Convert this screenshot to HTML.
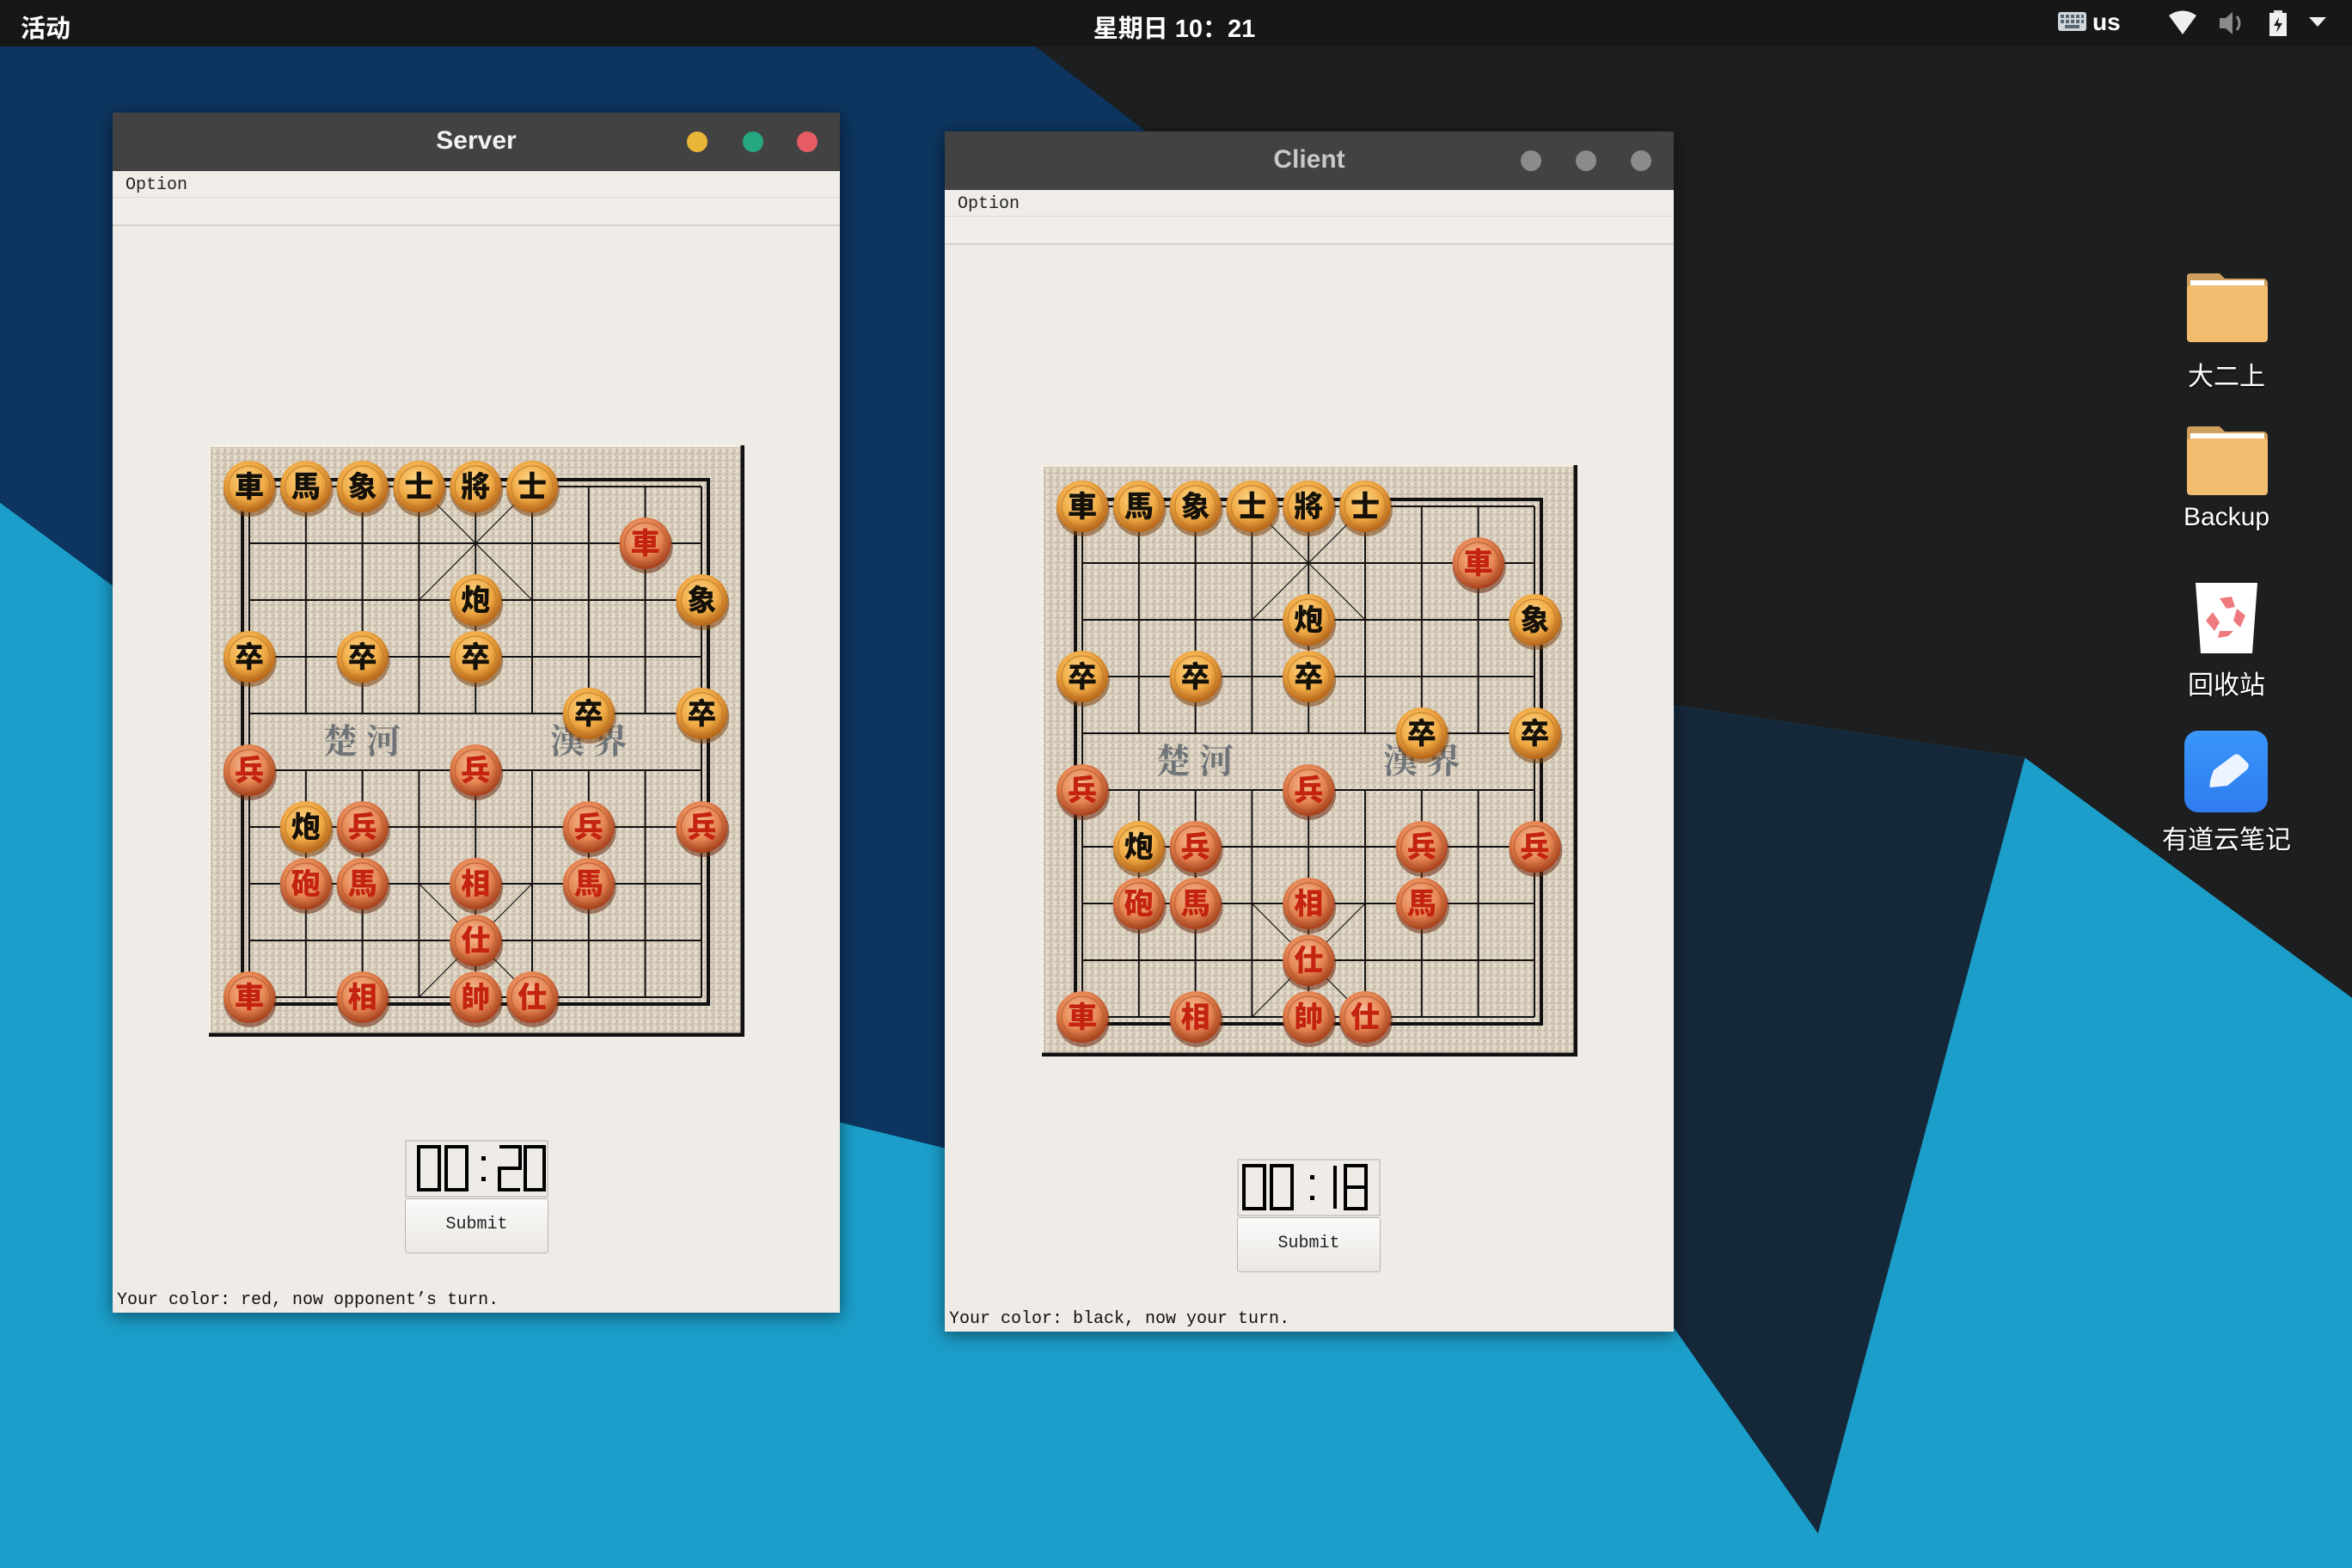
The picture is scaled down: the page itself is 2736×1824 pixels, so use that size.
<!DOCTYPE html>
<html><head><meta charset="utf-8">
<style>
*{margin:0;padding:0;box-sizing:border-box}
html,body{width:2736px;height:1824px;overflow:hidden;background:#1b9ec9;font-family:"Liberation Sans","Noto Sans CJK SC",sans-serif}
#bg{position:absolute;left:0;top:0;width:2736px;height:1824px}
#topbar{position:absolute;left:0;top:0;width:2736px;height:54px;background:#171717;color:#fff}
.win{position:absolute;background:#efebe7;box-shadow:0 4px 18px rgba(0,0,0,.5)}
.tb{position:absolute;left:0;top:0;width:100%;height:68px;background:#424242;}
.tb .t{position:absolute;left:0;width:100%;top:16px;text-align:center;font-weight:bold;font-size:30px;color:#f2f2f2}
.dot{position:absolute;top:22px;width:24px;height:24px;border-radius:50%}
.menu{position:absolute;left:0;top:68px;width:100%;height:31px;border-bottom:1px solid #dcd8d3;font-family:"Liberation Mono",monospace;font-size:20px;color:#222;padding:5px 0 0 15px;background:#f0ede9}
.tool{position:absolute;left:0;top:99px;width:100%;height:33px;border-bottom:2px solid #d6d2cc;background:#f1eeea}
.board{position:absolute;width:623px;height:688px}
.clock{position:absolute;width:167px;height:67px;background:#efebe7;border:2px solid #cfcbc6}
.btn{position:absolute;width:167px;height:64px;border:1px solid #b9b5b0;border-radius:3px;background:linear-gradient(#fbfaf9,#ebe8e4);font-family:"Liberation Mono",monospace;font-size:20px;text-align:center;line-height:60px;color:#222}
.status{position:absolute;left:5px;font-family:"Liberation Mono",monospace;font-size:20px;color:#111;white-space:pre}
.ic{position:absolute;text-align:center;color:#fff;font-size:30px;width:200px;font-family:"Liberation Sans","Noto Sans CJK SC",sans-serif;text-shadow:0 1px 2px #000}
.pc text{font-family:"Noto Sans CJK SC",sans-serif;font-weight:900;font-size:34px;text-anchor:middle}
.bk text{fill:#151008}
.rd text{fill:#c3230f}
</style></head><body>
<svg id="bg" viewBox="0 0 1568 1045" preserveAspectRatio="none">
<rect width="1568" height="1045" fill="#1b9ec9"/>
<polygon points="0,0 720,0 1116,480 1116,885 560,748 0,335" fill="#0d355f"/>
<polygon points="650,0 1568,0 1568,665 1350,505 1116,470 780,100" fill="#1d1e20"/>
<polygon points="1116,470 1350,505 1212,1022 1116,885" fill="#15283a"/>
</svg>

<div id="topbar">
<div style="position:absolute;left:24px;top:10px;font-size:29px;font-weight:bold">活动</div>
<div style="position:absolute;left:1266px;width:200px;top:10px;text-align:center;font-size:29px;font-weight:bold">星期日 10：21</div>
<svg style="position:absolute;left:2394px;top:14px" width="34" height="24"><rect x="0" y="0" width="33" height="22" rx="3" fill="#cfd6dc"/><g fill="#5a6570"><rect x="3" y="3" width="4" height="4"/><rect x="9" y="3" width="4" height="4"/><rect x="15" y="3" width="4" height="4"/><rect x="21" y="3" width="4" height="4"/><rect x="27" y="3" width="3" height="4"/><rect x="3" y="9" width="4" height="4"/><rect x="9" y="9" width="4" height="4"/><rect x="15" y="9" width="4" height="4"/><rect x="21" y="9" width="4" height="4"/><rect x="27" y="9" width="3" height="4"/><rect x="8" y="15" width="17" height="4"/></g></svg>
<div style="position:absolute;left:2434px;top:10px;font-size:28px;font-weight:bold">us</div>
<svg style="position:absolute;left:2522px;top:12px" width="34" height="30"><path d="M1,6 Q17,-5 33,6 L17,28 Z" fill="#efefef"/></svg>
<svg style="position:absolute;left:2580px;top:12px" width="34" height="30"><path d="M2,9 H9 L17,2 V28 L9,21 H2 Z" fill="#8a8a8a"/><path d="M22,7 Q28,15 22,23" stroke="#8a8a8a" stroke-width="3" fill="none"/></svg>
<svg style="position:absolute;left:2638px;top:12px" width="24" height="32"><rect x="7" y="0" width="10" height="4" fill="#ddd"/><rect x="2" y="3" width="20" height="27" fill="#efefef"/><path d="M13,8 L7,18 H12 L10,26 L17,15 H12 Z" fill="#1b1b1b"/></svg>
<svg style="position:absolute;left:2686px;top:20px" width="22" height="14"><path d="M0,0 H20 L10,11 Z" fill="#eee"/></svg>
</div>

<svg style="position:absolute;left:2542px;top:316px" width="98" height="84"><path d="M6,2 H40 L46,8 H90 Q96,8 96,14 V20 H2 V6 Q2,2 6,2Z" fill="#cf9f5d"/><rect x="6" y="10" width="86" height="20" fill="#fff"/><rect x="2" y="16" width="94" height="66" rx="4" fill="#f2bd6f"/></svg>
<div class="ic" style="left:2490px;top:413px">大二上</div>
<svg style="position:absolute;left:2542px;top:494px" width="98" height="84"><path d="M6,2 H40 L46,8 H90 Q96,8 96,14 V20 H2 V6 Q2,2 6,2Z" fill="#cf9f5d"/><rect x="6" y="10" width="86" height="20" fill="#fff"/><rect x="2" y="16" width="94" height="66" rx="4" fill="#f2bd6f"/></svg>
<div class="ic" style="left:2490px;top:585px">Backup</div>
<svg style="position:absolute;left:2552px;top:676px" width="76" height="86"><path d="M2,2 H74 L68,84 H8 Z" fill="#fff"/><g fill="#ee7a7f"><path d="M30,20 L44,18 L48,30 L38,32Z"/><path d="M50,32 L60,40 L54,54 L46,46Z"/><path d="M22,36 L30,48 L24,58 L14,46Z"/><path d="M30,58 L46,58 L40,64 L28,66Z"/></g></svg>
<div class="ic" style="left:2490px;top:772px">回收站</div>
<svg style="position:absolute;left:2541px;top:850px" width="98" height="96"><defs><linearGradient id="yd" x1="0" y1="0" x2="0" y2="1"><stop offset="0" stop-color="#3a96f8"/><stop offset="1" stop-color="#2f7cf0"/></linearGradient></defs><rect width="97" height="95" rx="16" fill="url(#yd)"/><path d="M34,46 L58,28 Q62,26 66,30 L74,38 Q76,42 72,46 L50,64 L30,66 Q28,62 34,46Z" fill="#eef4ff"/></svg>
<div class="ic" style="left:2490px;top:952px">有道云笔记</div>

<svg width="0" height="0" style="position:absolute">
<defs>
<radialGradient id="gb" cx="45%" cy="38%" r="60%"><stop offset="0" stop-color="#ffd98a"/><stop offset=".6" stop-color="#f0aa45"/><stop offset="1" stop-color="#b8681a"/></radialGradient>
<radialGradient id="gr" cx="45%" cy="38%" r="60%"><stop offset="0" stop-color="#f8c09a"/><stop offset=".6" stop-color="#e58552"/><stop offset="1" stop-color="#a9431e"/></radialGradient>
<pattern id="tex" width="8" height="8" patternUnits="userSpaceOnUse"><rect width="8" height="8" fill="#d9cfbf"/><rect x="0" y="0" width="4" height="3" fill="#c9bcaa"/><rect x="5" y="4" width="3" height="4" fill="#e6dece"/><rect x="2" y="5" width="2" height="2" fill="#bfb19f"/></pattern>
<g id="pb"><circle cx="1" cy="4" r="31" fill="#7a4410" opacity=".55"/><circle r="30" fill="url(#gb)"/><circle r="24" fill="none" stroke="#c07a28" stroke-width="1.5" opacity=".7"/></g>
<g id="pr"><circle cx="1" cy="4" r="31" fill="#6a2a10" opacity=".55"/><circle r="30" fill="url(#gr)"/><circle r="24" fill="none" stroke="#b85a30" stroke-width="1.5" opacity=".7"/></g>
</defs></svg>

<!-- SERVER -->
<div class="win" style="left:131px;top:131px;width:846px;height:1396px">
<div class="tb"><div class="t">Server</div>
<div class="dot" style="left:668px;background:#e8b637"></div>
<div class="dot" style="left:733px;background:#27a682"></div>
<div class="dot" style="left:796px;background:#e55c64"></div></div>
<div class="menu">Option</div><div class="tool"></div>
<svg class="board" style="left:112px;top:387px" viewBox="0 0 623 688">
<rect width="623" height="688" fill="url(#tex)"/>
<path d="M0,0 H623 M0,0 V688" stroke="#f6efe2" stroke-width="4"/>
<path d="M621,0 V686 H0" stroke="#111" stroke-width="5" fill="none"/>
<rect x="39" y="40" width="542" height="610" fill="none" stroke="#111" stroke-width="4"/>
<g stroke="#111" stroke-width="2" fill="none">
<path d="M47,48H573M47,114H573M47,180H573M47,246H573M47,312H573M47,378H573M47,444H573M47,510H573M47,576H573M47,642H573"/>
<path d="M47,48V642M573,48V642M112.8,48V312M178.6,48V312M244.4,48V312M310.2,48V312M376,48V312M441.8,48V312M507.6,48V312M112.8,378V642M178.6,378V642M244.4,378V642M310.2,378V642M376,378V642M441.8,378V642M507.6,378V642"/>
<path d="M244.4,48L376,180M376,48L244.4,180M244.4,510L376,642M376,510L244.4,642" stroke-width="1.2"/>
</g>
<text x="178" y="358" font-family="Noto Serif CJK SC,serif" font-size="40" font-weight="bold" fill="#6f7478" text-anchor="middle">楚 河</text>
<text x="442" y="358" font-family="Noto Serif CJK SC,serif" font-size="40" font-weight="bold" fill="#6f7478" text-anchor="middle">漢 界</text>
<g class="pc bk"><use href="#pb" x="47" y="48"/><text x="47" y="60">車</text><use href="#pb" x="112.8" y="48"/><text x="112.8" y="60">馬</text><use href="#pb" x="178.6" y="48"/><text x="178.6" y="60">象</text><use href="#pb" x="244.4" y="48"/><text x="244.4" y="60">士</text><use href="#pb" x="310.2" y="48"/><text x="310.2" y="60">將</text><use href="#pb" x="376" y="48"/><text x="376" y="60">士</text>
<use href="#pb" x="310.2" y="180"/><text x="310.2" y="192">炮</text><use href="#pb" x="573.4" y="180"/><text x="573.4" y="192">象</text>
<use href="#pb" x="47" y="246"/><text x="47" y="258">卒</text><use href="#pb" x="178.6" y="246"/><text x="178.6" y="258">卒</text><use href="#pb" x="310.2" y="246"/><text x="310.2" y="258">卒</text>
<use href="#pb" x="441.8" y="312"/><text x="441.8" y="324">卒</text><use href="#pb" x="573.4" y="312"/><text x="573.4" y="324">卒</text>
<use href="#pb" x="112.8" y="444"/><text x="112.8" y="456">炮</text></g>
<g class="pc rd"><use href="#pr" x="507.6" y="114"/><text x="507.6" y="126">車</text>
<use href="#pr" x="47" y="378"/><text x="47" y="390">兵</text><use href="#pr" x="310.2" y="378"/><text x="310.2" y="390">兵</text>
<use href="#pr" x="178.6" y="444"/><text x="178.6" y="456">兵</text><use href="#pr" x="441.8" y="444"/><text x="441.8" y="456">兵</text><use href="#pr" x="573.4" y="444"/><text x="573.4" y="456">兵</text>
<use href="#pr" x="112.8" y="510"/><text x="112.8" y="522">砲</text><use href="#pr" x="178.6" y="510"/><text x="178.6" y="522">馬</text><use href="#pr" x="310.2" y="510"/><text x="310.2" y="522">相</text><use href="#pr" x="441.8" y="510"/><text x="441.8" y="522">馬</text>
<use href="#pr" x="310.2" y="576"/><text x="310.2" y="588">仕</text>
<use href="#pr" x="47" y="642"/><text x="47" y="654">車</text><use href="#pr" x="178.6" y="642"/><text x="178.6" y="654">相</text><use href="#pr" x="310.2" y="642"/><text x="310.2" y="654">帥</text><use href="#pr" x="376" y="642"/><text x="376" y="654">仕</text></g>
</svg>
<div class="clock" style="left:340px;top:1195px"><svg width="163" height="63" viewBox="0 0 163 63"><g fill="none" stroke="#000" stroke-width="4"><rect x="14" y="6" width="24" height="50"/><rect x="46" y="6" width="24" height="50"/><path d="M108,6H132V31H108V56H132"/><rect x="138" y="6" width="22" height="50"/></g><rect x="87" y="17" width="5" height="5"/><rect x="87" y="41" width="5" height="5"/></svg></div>
<div class="btn" style="left:340px;top:1263px">Submit</div>
<div class="status" style="top:1370px">Your color: red, now opponent’s turn.</div>
</div>

<!-- CLIENT -->
<div class="win" style="left:1099px;top:153px;width:848px;height:1396px">
<div class="tb"><div class="t" style="color:#c9c9c9">Client</div>
<div class="dot" style="left:670px;background:#8b8b8b"></div>
<div class="dot" style="left:734px;background:#8b8b8b"></div>
<div class="dot" style="left:798px;background:#8b8b8b"></div></div>
<div class="menu">Option</div><div class="tool"></div>
<svg class="board" style="left:113px;top:388px" viewBox="0 0 623 688">
<rect width="623" height="688" fill="url(#tex)"/>
<path d="M0,0 H623 M0,0 V688" stroke="#f6efe2" stroke-width="4"/>
<path d="M621,0 V686 H0" stroke="#111" stroke-width="5" fill="none"/>
<rect x="39" y="40" width="542" height="610" fill="none" stroke="#111" stroke-width="4"/>
<g stroke="#111" stroke-width="2" fill="none">
<path d="M47,48H573M47,114H573M47,180H573M47,246H573M47,312H573M47,378H573M47,444H573M47,510H573M47,576H573M47,642H573"/>
<path d="M47,48V642M573,48V642M112.8,48V312M178.6,48V312M244.4,48V312M310.2,48V312M376,48V312M441.8,48V312M507.6,48V312M112.8,378V642M178.6,378V642M244.4,378V642M310.2,378V642M376,378V642M441.8,378V642M507.6,378V642"/>
<path d="M244.4,48L376,180M376,48L244.4,180M244.4,510L376,642M376,510L244.4,642" stroke-width="1.2"/>
</g>
<text x="178" y="358" font-family="Noto Serif CJK SC,serif" font-size="40" font-weight="bold" fill="#6f7478" text-anchor="middle">楚 河</text>
<text x="442" y="358" font-family="Noto Serif CJK SC,serif" font-size="40" font-weight="bold" fill="#6f7478" text-anchor="middle">漢 界</text>
<g class="pc bk"><use href="#pb" x="47" y="48"/><text x="47" y="60">車</text><use href="#pb" x="112.8" y="48"/><text x="112.8" y="60">馬</text><use href="#pb" x="178.6" y="48"/><text x="178.6" y="60">象</text><use href="#pb" x="244.4" y="48"/><text x="244.4" y="60">士</text><use href="#pb" x="310.2" y="48"/><text x="310.2" y="60">將</text><use href="#pb" x="376" y="48"/><text x="376" y="60">士</text>
<use href="#pb" x="310.2" y="180"/><text x="310.2" y="192">炮</text><use href="#pb" x="573.4" y="180"/><text x="573.4" y="192">象</text>
<use href="#pb" x="47" y="246"/><text x="47" y="258">卒</text><use href="#pb" x="178.6" y="246"/><text x="178.6" y="258">卒</text><use href="#pb" x="310.2" y="246"/><text x="310.2" y="258">卒</text>
<use href="#pb" x="441.8" y="312"/><text x="441.8" y="324">卒</text><use href="#pb" x="573.4" y="312"/><text x="573.4" y="324">卒</text>
<use href="#pb" x="112.8" y="444"/><text x="112.8" y="456">炮</text></g>
<g class="pc rd"><use href="#pr" x="507.6" y="114"/><text x="507.6" y="126">車</text>
<use href="#pr" x="47" y="378"/><text x="47" y="390">兵</text><use href="#pr" x="310.2" y="378"/><text x="310.2" y="390">兵</text>
<use href="#pr" x="178.6" y="444"/><text x="178.6" y="456">兵</text><use href="#pr" x="441.8" y="444"/><text x="441.8" y="456">兵</text><use href="#pr" x="573.4" y="444"/><text x="573.4" y="456">兵</text>
<use href="#pr" x="112.8" y="510"/><text x="112.8" y="522">砲</text><use href="#pr" x="178.6" y="510"/><text x="178.6" y="522">馬</text><use href="#pr" x="310.2" y="510"/><text x="310.2" y="522">相</text><use href="#pr" x="441.8" y="510"/><text x="441.8" y="522">馬</text>
<use href="#pr" x="310.2" y="576"/><text x="310.2" y="588">仕</text>
<use href="#pr" x="47" y="642"/><text x="47" y="654">車</text><use href="#pr" x="178.6" y="642"/><text x="178.6" y="654">相</text><use href="#pr" x="310.2" y="642"/><text x="310.2" y="654">帥</text><use href="#pr" x="376" y="642"/><text x="376" y="654">仕</text></g>
</svg>
<div class="clock" style="left:340px;top:1195px"><svg width="163" height="63" viewBox="0 0 163 63"><g fill="none" stroke="#000" stroke-width="4"><rect x="6" y="6" width="24" height="50"/><rect x="38" y="6" width="24" height="50"/><path d="M112,6V56"/><rect x="124" y="6" width="24" height="50"/><path d="M124,31H148"/></g><rect x="83" y="17" width="5" height="5"/><rect x="83" y="41" width="5" height="5"/></svg></div>
<div class="btn" style="left:340px;top:1263px">Submit</div>
<div class="status" style="top:1370px">Your color: black, now your turn.</div>
</div>
</body></html>
